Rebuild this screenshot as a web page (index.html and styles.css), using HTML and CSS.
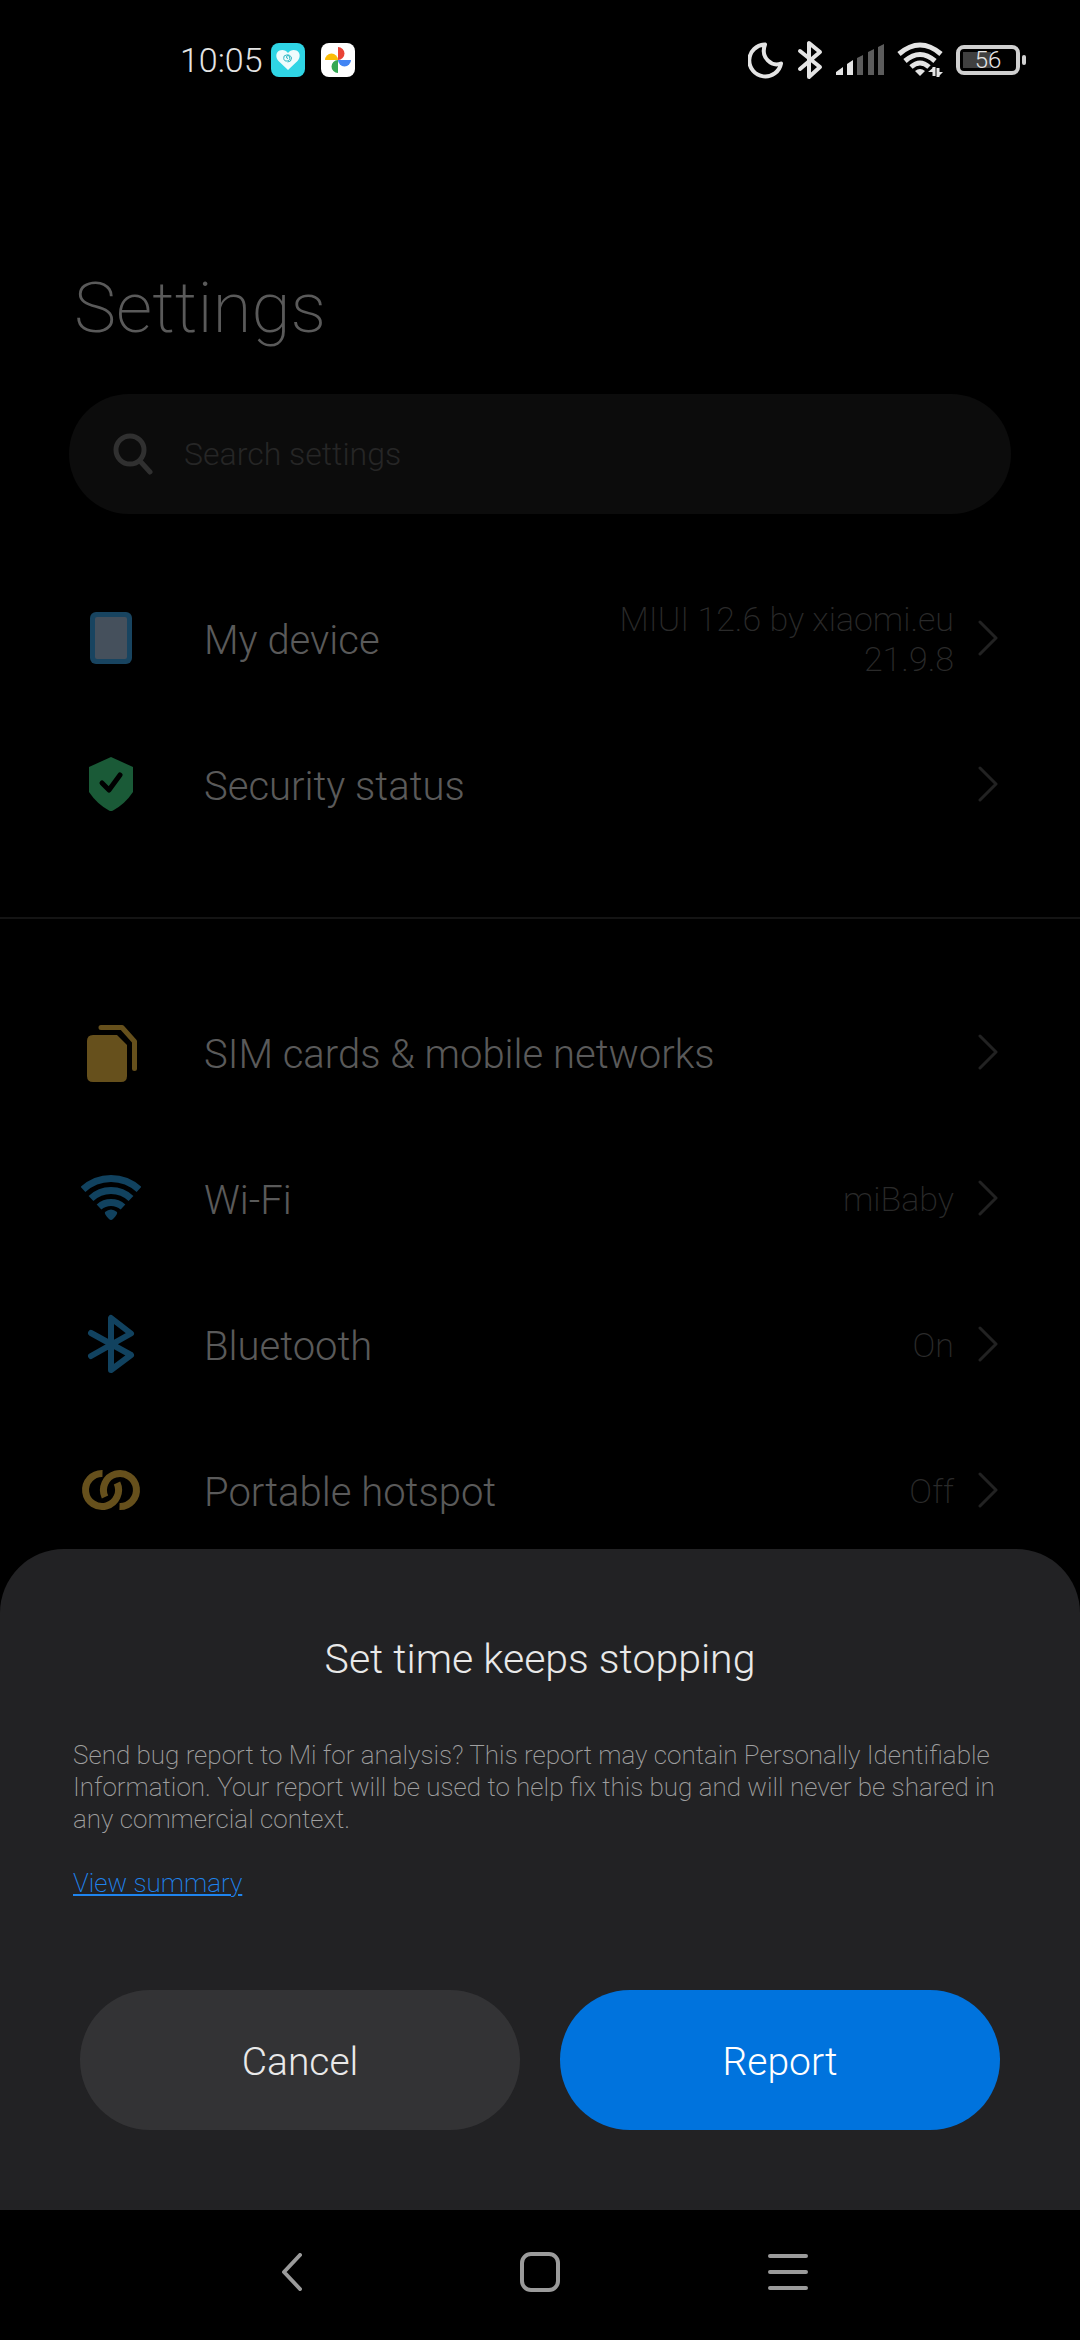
FILE: index.html
```html
<!DOCTYPE html>
<html lang="en">
<head>
    <meta charset="UTF-8">
    <meta name="viewport" content="width=device-width, initial-scale=1.0">
    <title>Settings</title>
    <link rel="stylesheet" href="styles.css">
</head>
<body>

    <!-- Status bar -->
    <header class="status-bar">
        <div class="status-left">
            <span class="clock">10:05</span>
            <svg class="app-icon" width="34" height="34" viewBox="0 0 34 34">
                <rect width="34" height="34" rx="8" fill="#2fd5e5"/>
                <path d="M17 27 L7.500 18 C4 14 5 9 8.500 7.500 C12 6 15 7.500 17 10 C19 7.500 22 6 25.500 7.500 C29 9 30 14 26.500 18 Z" fill="#effcfd"/>
                <path d="M17 15.500 a1.500 1.500 0 1 1 1.500 -1.500 a3 3 0 1 1 -3 -2 a4 4 0 0 1 5 3 a4 4 0 0 1 -4 4" fill="none" stroke="#2fb8c5" stroke-width="1"/>
            </svg>
            <svg class="app-icon" width="34" height="34" viewBox="0 0 34 34">
                <rect width="34" height="34" rx="8" fill="#fff"/>
                <path d="M17 17 V4 A6.500 6.500 0 0 1 17 17 Z" fill="#e94335"/>
                <path d="M17 17 H30 A6.500 6.500 0 0 1 17 17 Z" fill="#4285f4"/>
                <path d="M17 17 V30 A6.500 6.500 0 0 1 17 17 Z" fill="#34a853"/>
                <path d="M17 17 H4 A6.500 6.500 0 0 1 17 17 Z" fill="#fbbc05"/>
            </svg>
        </div>
        <div class="status-right">
            <svg width="36" height="38" viewBox="0 0 36 38" fill="none" stroke="#e4e4e4" stroke-width="4" stroke-linejoin="round">
                <path d="M17 3.500 A16 16 0 1 0 33 22.500 C24 26 12 17 17 3.500 Z"/>
            </svg>
            <svg width="26" height="40" viewBox="0 0 26 40" fill="none" stroke="#e4e4e4" stroke-width="4" stroke-linecap="round" stroke-linejoin="round">
                <path d="M3 29 L23 12 L12 3 V37 L23 27 L3 11"/>
            </svg>
            <svg width="48" height="32" viewBox="0 0 48 32">
                <path d="M0 31 V28 L7 23 V31 Z M11 31 V20 L17 16 V31 Z" fill="#e4e4e4"/>
                <path d="M21 31 V14 L27 11 V31 Z M32 31 V8 L38 5 V31 Z M42 31 V3 L48 0 V31 Z" fill="#5c5c5c"/>
            </svg>
            <svg width="46" height="36" viewBox="0 0 46 36" fill="none" stroke="#e4e4e4" stroke-width="5">
                <path d="M2 12 Q23 -6 44 12 M8 19 Q23 6 38 19 M14 25 Q23 17 32 25"/>
                <path d="M18 29 Q23 25 28 29 L23 34 Z" fill="#e4e4e4" stroke="none"/>
                <path d="M37 25 V34 M41 26 V35" stroke-width="3"/>
                <path d="M31 30 H37 V25 Z M41 35 L46 30 H41 Z" fill="#e4e4e4" stroke="none"/>
            </svg>
            <div class="battery"><span>56</span></div>
        </div>
    </header>

    <!-- Settings screen, dimmed while the dialog is open -->
    <main class="settings">
        <h1>Settings</h1>

        <label class="search">
            <svg width="40" height="42" viewBox="0 0 40 42" fill="none" stroke="#303030" stroke-width="5" stroke-linecap="round">
                <circle cx="17" cy="17" r="14"/>
                <path d="M27 28 L37 39"/>
            </svg>
            <input type="search" placeholder="Search settings" aria-label="Search settings">
        </label>

        <nav class="group">
            <a class="row" href="#device">
                <svg class="row-icon" viewBox="0 0 60 60">
                    <rect x="9" y="4" width="42" height="52" rx="6" fill="#184460"/>
                    <rect x="14" y="9" width="32" height="42" rx="2" fill="#45505c"/>
                </svg>
                <span class="label">My device</span>
                <span class="value">MIUI 12.6 by xiaomi.eu<br>21.9.8</span>
                <svg class="chevron" viewBox="0 0 20 36"><path d="M2 2 L18 18 L2 34"/></svg>
            </a>
            <a class="row" href="#security">
                <svg class="row-icon" viewBox="0 0 60 60">
                    <path d="M30 3 L52 13 V38 Q44 50 32 56.500 Q30 57.500 28 56.500 Q16 50 8 38 V13 Z" fill="#1a5a37"/>
                    <path d="M21 29 L28 36 L39 21" fill="none" stroke="#000" stroke-width="5" stroke-linecap="round" stroke-linejoin="round"/>
                </svg>
                <span class="label">Security status</span>
                <svg class="chevron" viewBox="0 0 20 36"><path d="M2 2 L18 18 L2 34"/></svg>
            </a>
        </nav>

        <nav class="group">
            <a class="row" href="#sim">
                <svg class="row-icon" viewBox="0 0 60 60">
                    <path d="M12 13 H36 L46 23 V54 Q46 60 40 60 H12 Q6 60 6 54 V19 Q6 13 12 13 Z" fill="#66501c"/>
                    <path d="M20 5.500 H41 L53.500 19.500 V46.500" fill="none" stroke="#66501c" stroke-width="5" stroke-linecap="round" stroke-linejoin="round"/>
                </svg>
                <span class="label">SIM cards &amp; mobile networks</span>
                <svg class="chevron" viewBox="0 0 20 36"><path d="M2 2 L18 18 L2 34"/></svg>
            </a>
            <a class="row" href="#wifi">
                <svg class="row-icon" viewBox="0 0 60 60" fill="none" stroke="#11425f" stroke-width="7">
                    <path d="M2 21.500 A41 41 0 0 1 58 21.500 M10 30.500 A29 29 0 0 1 50 30.500 M18 39 A18 18 0 0 1 42 39"/>
                    <path d="M24 44 Q30 39 36 44 Q37 46 32 51 Q30 53 28 51 Q23 46 24 44 Z" fill="#11425f" stroke="none"/>
                </svg>
                <span class="label">Wi-Fi</span>
                <span class="value">miBaby</span>
                <svg class="chevron" viewBox="0 0 20 36"><path d="M2 2 L18 18 L2 34"/></svg>
            </a>
            <a class="row" href="#bluetooth">
                <svg class="row-icon" viewBox="0 0 60 60" fill="none" stroke="#11425f" stroke-width="6" stroke-linecap="round" stroke-linejoin="round">
                    <path d="M10 42 L50 19.500 L30 4 V56 L50 41 L10 19"/>
                </svg>
                <span class="label">Bluetooth</span>
                <span class="value">On</span>
                <svg class="chevron" viewBox="0 0 20 36"><path d="M2 2 L18 18 L2 34"/></svg>
            </a>
            <a class="row" href="#hotspot">
                <svg class="row-icon" viewBox="0 0 60 60" fill="none" stroke="#66501c" stroke-width="7">
                    <path d="M21.500 13.500 A16.500 16.500 0 1 0 36 23"/>
                    <path d="M38.500 46.500 A16.500 16.500 0 1 0 24 37"/>
                </svg>
                <span class="label">Portable hotspot</span>
                <span class="value">Off</span>
                <svg class="chevron" viewBox="0 0 20 36"><path d="M2 2 L18 18 L2 34"/></svg>
            </a>
        </nav>
    </main>

    <!-- Crash dialog and system navigation -->
    <div class="bottom">
        <section class="sheet" role="dialog" aria-labelledby="sheetTitle">
            <h2 id="sheetTitle">Set time keeps stopping</h2>
            <p>Send bug report to Mi for analysis? This report may contain Personally Identifiable Information. Your report will be used to help fix this bug and will never be shared in any commercial context.</p>
            <a class="summary" href="#summary">View summary</a>
            <div class="actions">
                <button class="cancel">Cancel</button>
                <button class="report">Report</button>
            </div>
        </section>
        <div class="nav-bar">
            <button aria-label="Back">
                <svg width="20" height="38" viewBox="0 0 20 38"><path d="M18 2 L2 19 L18 36"/></svg>
            </button>
            <button aria-label="Home">
                <svg width="40" height="40" viewBox="0 0 40 40"><rect x="2" y="2" width="36" height="36" rx="9"/></svg>
            </button>
            <button aria-label="Menu">
                <svg width="40" height="36" viewBox="0 0 40 36"><path d="M2 2 H38 M2 18 H38 M2 34 H38"/></svg>
            </button>
        </div>
    </div>

</body>
</html>
```
FILE: styles.css
```css
* { box-sizing: border-box; }
body { margin: 0; min-height: 100vh; background: #000; color: #5a5a5a; font-family: Roboto, sans-serif; font-weight: 300; }
a { color: inherit; text-decoration: none; }
button { border: none; font: inherit; cursor: pointer; }
svg { display: block; flex: none; }

.status-bar { display: flex; justify-content: space-between; align-items: center; height: 120px; padding: 0 54px 0 180px; color: #e4e4e4; }
.status-left, .status-right { display: flex; align-items: center; }
.clock { font-size: 34px; margin-right: 8px; }
.app-icon { margin-right: 16px; }
.status-right { gap: 13px; }
.battery { position: relative; width: 64px; height: 30px; margin-right: 6px; border: 4px solid #d0d0d0; border-radius: 8px; font-size: 24px; line-height: 22px; text-align: center; background: linear-gradient(#404040, #404040) 3px 3px / 28px 16px no-repeat; }
.battery::after { content: ""; position: absolute; top: 6px; right: -10px; width: 4px; height: 10px; border-radius: 2px; background: #d0d0d0; }

h1 { margin: 0 74px; padding: 145px 0 43px; font-size: 71px; line-height: 86px; font-weight: 200; }
.search { display: flex; align-items: center; gap: 29px; height: 120px; margin: 0 69px 51px; padding: 0 44px; border-radius: 60px; background: #0c0c0c; }
.search input { flex: 1; min-width: 0; border: none; outline: none; background: none; color: #5a5a5a; font: inherit; font-size: 32px; }
.search input::placeholder { color: #262626; }

.group + .group { margin-top: 60px; padding-top: 60px; border-top: 2px solid #141414; }
.row { display: flex; align-items: center; height: 146px; padding: 0 82px 0 81px; }
.row-icon { width: 60px; height: 60px; margin-right: 63px; }
.label { flex: 1; padding-top: 4px; font-size: 40px; }
.value { padding-top: 2px; font-size: 34px; line-height: 40px; font-weight: 200; text-align: right; color: #2a2a2a; }
.chevron { width: 20px; height: 36px; margin-left: 24px; fill: none; stroke: #222; stroke-width: 3; stroke-linecap: round; stroke-linejoin: round; }

.bottom { position: fixed; left: 0; right: 0; bottom: 0; }
.sheet { padding: 86px 73px 80px; border-radius: 64px 64px 0 0; background: #222224; }
.sheet h2 { margin: 0 0 56px; font-size: 41px; line-height: 48px; font-weight: 300; text-align: center; color: #e9e9e9; }
.sheet p { margin: 0 0 32px; font-size: 26px; line-height: 32px; font-weight: 200; color: #a0a0a0; }
.summary { display: block; font-size: 26px; line-height: 32px; font-weight: 200; color: #1f84ee; text-decoration: underline; }
.actions { display: flex; gap: 40px; margin-top: 91px; padding: 0 7px; }
.actions button { flex: 1; height: 140px; padding-top: 4px; border-radius: 70px; font-size: 39px; color: #e9e9e9; }
.actions .cancel { background: #333335; }
.actions .report { background: #0073dd; color: #fff; }

.nav-bar { display: flex; justify-content: center; height: 130px; padding-bottom: 6px; background: #000; }
.nav-bar button { display: flex; align-items: center; justify-content: center; width: 23%; background: none; }
.nav-bar svg { fill: none; stroke: #9b9b9b; stroke-width: 4; stroke-linecap: round; stroke-linejoin: round; }
```
